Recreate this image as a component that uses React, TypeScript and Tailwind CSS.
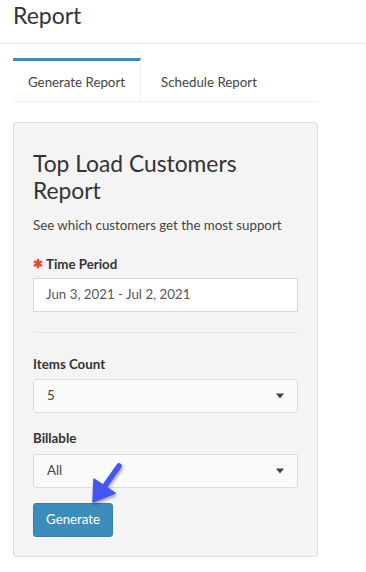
import { useState } from "react"

function Caret() {
  return (
    <svg width="10" height="6" viewBox="0 0 10 6" className="shrink-0">
      <path d="M1 0.5 L9 0.5 L5 5.5 Z" fill="#444" />
    </svg>
  )
}

function SelectBox({ value }: { value: string }) {
  return (
    <div className="h-[34px] w-full flex items-center justify-between pl-[13px] pr-[12px] bg-[#fafafa] border border-[#d9dce2] rounded-[3px] text-[13.3px] text-[#444]">
      <span>{value}</span>
      <Caret />
    </div>
  )
}

export default function App() {
  const [tab, setTab] = useState(0)
  const tabs = ["Generate Report", "Schedule Report"]

  return (
    <div className="w-[366px] h-[572px] bg-white font-['Lato','Liberation_Sans',sans-serif] text-[#333] overflow-hidden">
      {/* Page header */}
      <div className="h-[44px] border-b border-[#e5e5e5] px-[13px]">
        <h1 className="text-[23px] leading-[30px] text-[#333]">Report</h1>
      </div>

      {/* Tabs */}
      <div className="mx-[13px] mt-[14px] w-[305px] flex border-b border-[#f0f0f0]">
        {tabs.map((t, i) => (
          <button
            key={t}
            onClick={() => setTab(i)}
            className={
              i === tab
                ? "h-[43px] w-[128px] pt-[3px] border-t-[3px] border-[#3c8dbc] border-r border-r-[#f0f0f0] text-[13.3px] text-[#444] flex items-center justify-center"
                : "h-[43px] px-[20px] pt-[3px] border-t-[3px] border-transparent text-[13.3px] text-[#444] flex items-center justify-center"
            }
          >
            {t}
          </button>
        ))}
      </div>

      {/* Card */}
      <div className="mx-[13px] mt-[20px] w-[305px] bg-[#f4f4f4] border border-[#dddddd] rounded-[3px] px-[19px] pt-[27px] pb-[19px]">
        <h2 className="text-[22.8px] leading-[27px] text-[#333]">Top Load Customers Report</h2>
        <p className="mt-[11px] text-[13.3px] leading-[20px] text-[#444]">See which customers get the most support</p>

        <label className="mt-[19px] flex items-center gap-[3px] text-[13.3px] leading-[20px] font-bold text-[#333]">
          <span className="text-[#dd4b39] text-[12px] leading-none">✱</span>
          Time Period
        </label>
        <div className="mt-[4px] h-[34px] w-full flex items-center px-[12px] bg-white border border-[#d2d6de] text-[13.3px] text-[#555]">
          Jun 3, 2021 - Jul 2, 2021
        </div>

        <div className="mt-[20px] border-t border-[#e7e7e7]" />

        <label className="mt-[21px] block text-[13.3px] leading-[20px] font-bold text-[#333]">Items Count</label>
        <div className="mt-[5px]">
          <SelectBox value="5" />
        </div>

        <label className="mt-[15px] block text-[13.3px] leading-[20px] font-bold text-[#333]">Billable</label>
        <div className="mt-[6px]">
          <SelectBox value="All" />
        </div>

        <div className="relative mt-[15px]">
          <button className="h-[34px] px-[12px] bg-[#3c8dbc] border border-[#367fa9] rounded-[3px] text-white text-[13.3px]">
            Generate
          </button>
          {/* pointer arrow annotation */}
          <svg
            className="absolute left-[55px] top-[-40px] pointer-events-none"
            width="40"
            height="46"
            viewBox="0 0 40 46"
            style={{ filter: "drop-shadow(1px 2px 1.5px rgba(0,0,0,0.35))" }}
          >
            <path d="M31 3 L14 27" stroke="#4455f5" strokeWidth="5.5" strokeLinecap="round" />
            <path d="M6 16 L5 39 L27 30 Z" fill="#4455f5" stroke="#4455f5" strokeWidth="1.5" strokeLinejoin="round" />
          </svg>
        </div>
      </div>
    </div>
  )
}
